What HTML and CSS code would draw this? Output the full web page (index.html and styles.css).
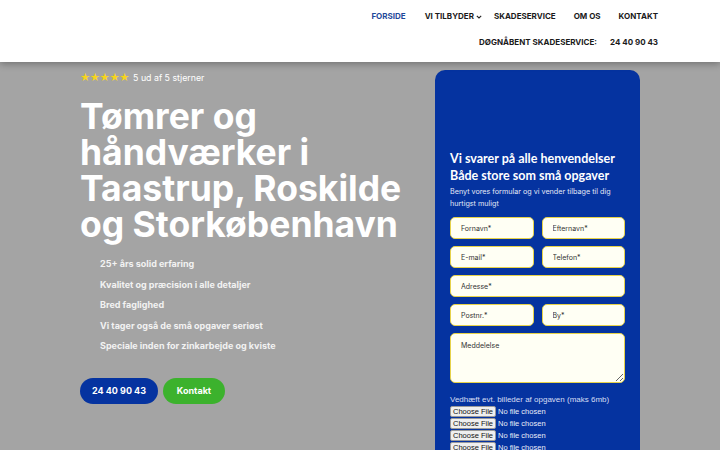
FILE: index.html
```html
<!DOCTYPE html>
<html lang="da">
<head>
<meta name="viewport" content="width=device-width, initial-scale=1">
<link rel="stylesheet" href="styles.css">
</head>
<body>

<header class="site-header">
  <nav class="main-nav">
    <a href="#" class="active">Forside</a>
    <a href="#" class="has-sub">Vi tilbyder
      <svg width="6" height="4" viewBox="0 0 6 4"><path d="M0.8 0.8 L3 3 L5.2 0.8" fill="none" stroke="#222" stroke-width="1.1"/></svg>
    </a>
    <a href="#">Skadeservice</a>
    <a href="#">Om os</a>
    <a href="#">Kontakt</a>
  </nav>
  <div class="emergency">
    <span>Døgnåbent skadeservice:</span>
    <a href="tel:24409043">24 40 90 43</a>
  </div>
</header>

<main class="hero">
  <section class="hero-text">
    <div class="rating">
      <span class="stars">★★★★★</span>
      <span>5 ud af 5 stjerner</span>
    </div>
    <h1>Tømrer og håndværker i Taastrup, Roskilde og Storkøbenhavn</h1>
    <ul class="usp">
      <li>25+ års solid erfaring</li>
      <li>Kvalitet og præcision i alle detaljer</li>
      <li>Bred faglighed</li>
      <li>Vi tager også de små opgaver seriøst</li>
      <li>Speciale inden for zinkarbejde og kviste</li>
    </ul>
    <div class="buttons">
      <a href="tel:24409043" class="btn btn-blue">24 40 90 43</a>
      <a href="#kontakt" class="btn btn-green">Kontakt</a>
    </div>
  </section>

  <aside class="contact-card" id="kontakt">
    <h3>Vi svarer på alle henvendelser<br>Både store som små opgaver</h3>
    <p class="lead">Benyt vores formular og vi vender tilbage til dig hurtigst muligt</p>
    <form class="contact-form">
      <input type="text" placeholder="Fornavn*">
      <input type="text" placeholder="Efternavn*">
      <input type="email" placeholder="E-mail*">
      <input type="tel" placeholder="Telefon*">
      <input type="text" class="wide" placeholder="Adresse*">
      <input type="text" placeholder="Postnr.*">
      <input type="text" placeholder="By*">
      <textarea class="wide" placeholder="Meddelelse"></textarea>
      <label class="files wide">Vedhæft evt. billeder af opgaven (maks 6mb)</label>
      <input type="file" class="file wide">
      <input type="file" class="file wide">
      <input type="file" class="file wide">
      <input type="file" class="file wide">
    </form>
  </aside>
</main>

</body>
</html>
```

FILE: styles.css
```css
* {
  box-sizing: border-box;
}

body {
  margin: 0;
  background: #a4a4a4;
  font-family: Inter, "Liberation Sans", sans-serif;
  height: 450px;
  overflow: hidden;
}

a {
  text-decoration: none;
}

/* header */
.site-header {
  background: #fff;
  height: 62px;
  padding: 10px 62px 0 0;
  display: flex;
  flex-direction: column;
  align-items: flex-end;
  box-shadow: 0 2px 7px rgba(0, 0, 0, 0.3);
  position: relative;
}

.main-nav {
  display: flex;
  gap: 18px;
}

.main-nav a,
.emergency {
  font-size: 8px;
  font-weight: 700;
  text-transform: uppercase;
  color: #1a1a1a;
  line-height: 13px;
}

.main-nav a.active {
  color: #1f4a9a;
  margin-right: 1px;
}

.main-nav a.has-sub {
  display: flex;
  align-items: center;
  gap: 2px;
  margin-right: -6px;
}

.emergency {
  margin-top: 13px;
  display: flex;
  gap: 13px;
}

.emergency a {
  color: #1a1a1a;
}

/* hero */
.hero {
  display: flex;
  padding: 8px 0 0 80px;
}

.hero-text {
  width: 355px;
}

.rating {
  display: flex;
  align-items: center;
  gap: 4px;
  height: 12px;
  margin-top: 1px;
  font-size: 8.8px;
  color: #fff;
}

.stars {
  color: #f7d51c;
  font-size: 11.5px;
  letter-spacing: -0.5px;
  font-family: "DejaVu Sans", sans-serif;
}

.hero h1 {
  margin: 16px 0 0;
  max-width: 345px;
  font-size: 35.5px;
  line-height: 36px;
  font-weight: 700;
  color: #fff;
  letter-spacing: 0;
}

.usp {
  list-style: none;
  margin: 11px 0 0;
  padding: 0 0 0 20px;
}

.usp li {
  font-size: 9px;
  font-weight: 700;
  line-height: 20.5px;
  color: #f2f2f2;
}

.buttons {
  display: flex;
  gap: 5px;
  margin-top: 21px;
}

.btn {
  height: 26px;
  border-radius: 13px;
  color: #fff;
  font-size: 9px;
  font-weight: 700;
  display: flex;
  align-items: center;
  justify-content: center;
}

.btn-blue {
  background: #0533a0;
  width: 78px;
}

.btn-green {
  background: #3cb22d;
  width: 62px;
}

/* contact card */
.contact-card {
  width: 205px;
  height: 400px;
  background: #0533a0;
  border-radius: 10px;
  padding: 80px 15px 0;
  color: #fff;
}

.contact-card h3 {
  margin: 0;
  font-family: Lato, sans-serif;
  font-size: 12.5px;
  line-height: 17px;
  font-weight: 700;
}

.lead {
  margin: 2px 0 0;
  font-size: 7.2px;
  line-height: 12px;
  color: #e4e9f7;
}

.contact-form {
  margin-top: 7px;
  display: grid;
  grid-template-columns: 1fr 1fr;
  column-gap: 8px;
  row-gap: 7px;
}

.contact-form .wide {
  grid-column: 1 / 3;
}

.contact-form input[type="text"],
.contact-form input[type="email"],
.contact-form input[type="tel"],
.contact-form textarea {
  height: 22px;
  width: 100%;
  border: 1.5px solid #e6d24a;
  border-radius: 5px;
  background: #fffff4;
  padding: 0 10px;
  font-family: Inter, sans-serif;
  font-size: 7px;
  color: #333;
}

.contact-form textarea {
  height: 50px;
  padding-top: 7px;
  resize: vertical;
}

.contact-form ::placeholder {
  color: #333;
}

.files {
  margin-top: 5px;
  font-family: "Liberation Sans", sans-serif;
  font-size: 8px;
  color: #d6def4;
  line-height: 10px;
}

.contact-form .file {
  font-family: "Liberation Sans", sans-serif;
  font-size: 7.5px;
  color: #e9edf8;
  height: 11px;
  margin-top: -6px;
}

.contact-form .file::file-selector-button {
  font-family: "Liberation Sans", sans-serif;
  font-size: 7.5px;
  height: 11px;
  padding: 0 2px;
  margin-right: 2px;
  border: 1px solid #9a9a9a;
  border-radius: 2px;
  background: #efefef;
  color: #111;
}
```
